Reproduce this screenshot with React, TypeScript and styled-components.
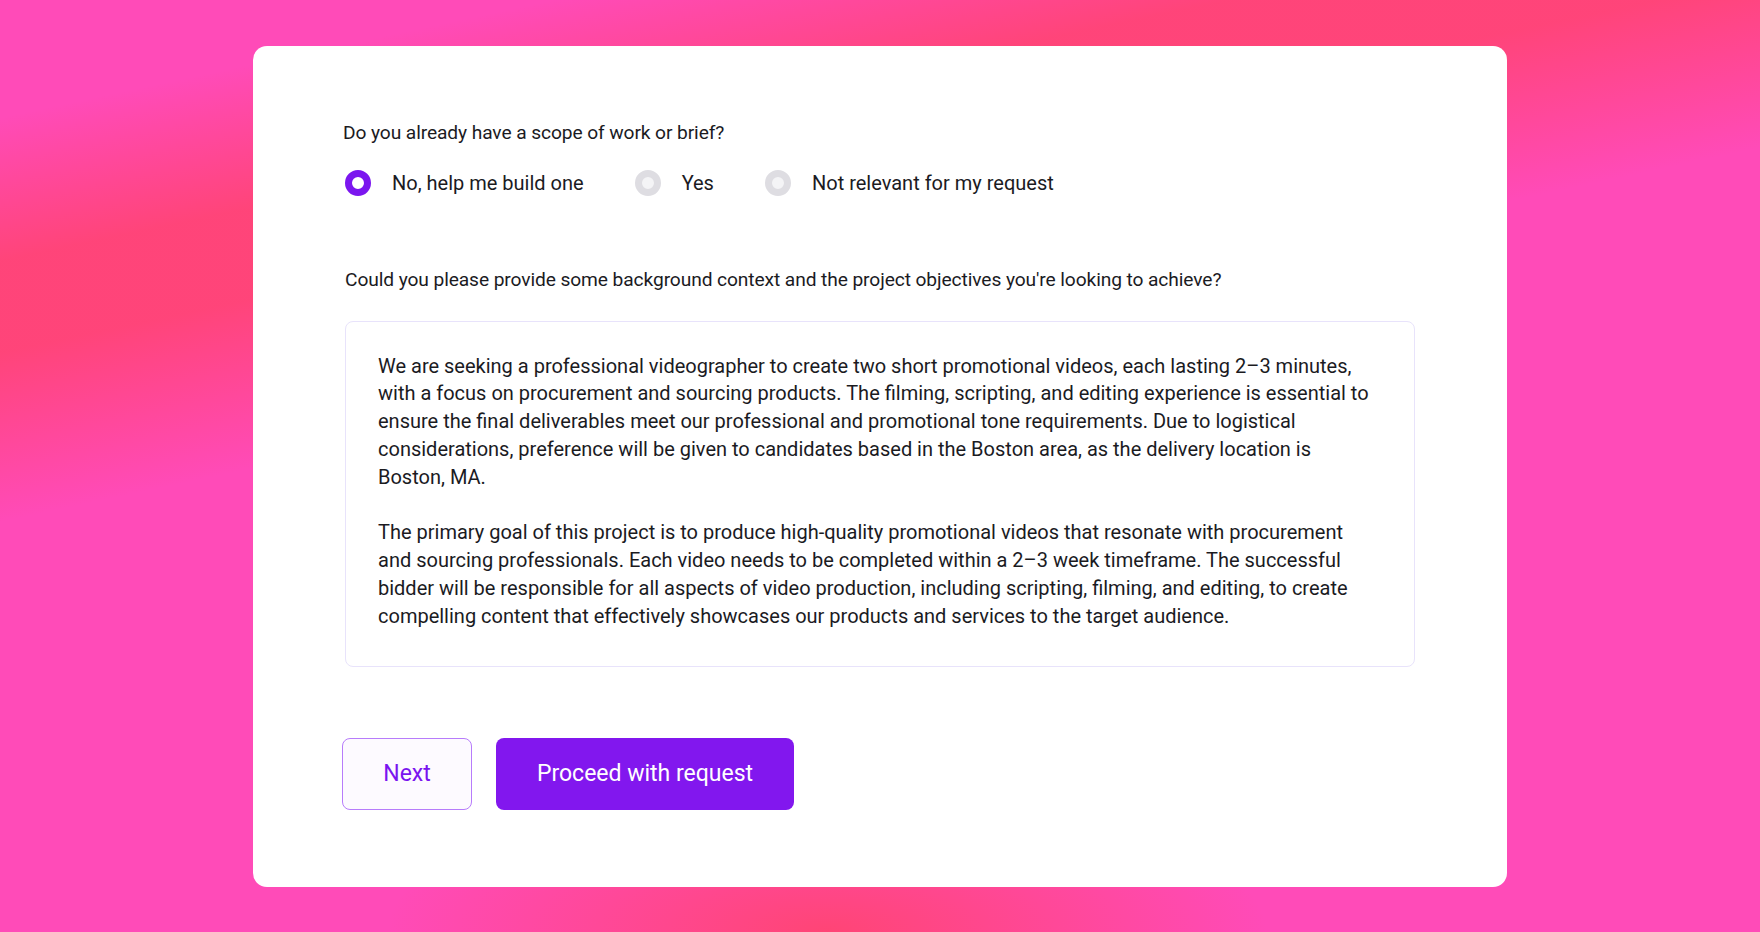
import styled, { createGlobalStyle } from "styled-components";

const GlobalStyle = createGlobalStyle`
  html, body {
    margin: 0;
    padding: 0;
  }

  body {
    font-family: Roboto, "Liberation Sans", Arial, sans-serif;
    color: #1b1b1f;
    -webkit-font-smoothing: antialiased;
  }
`;

const options = ["No, help me build one", "Yes", "Not relevant for my request"];

// brief text, broken where the original field wraps
const paragraphs = [
  [
    "We are seeking a professional videographer to create two short promotional videos, each lasting 2–3 minutes,",
    "with a focus on procurement and sourcing products. The filming, scripting, and editing experience is essential to",
    "ensure the final deliverables meet our professional and promotional tone requirements. Due to logistical",
    "considerations, preference will be given to candidates based in the Boston area, as the delivery location is",
    "Boston, MA.",
  ],
  [
    "The primary goal of this project is to produce high-quality promotional videos that resonate with procurement",
    "and sourcing professionals. Each video needs to be completed within a 2–3 week timeframe. The successful",
    "bidder will be responsible for all aspects of video production, including scripting, filming, and editing, to create",
    "compelling content that effectively showcases our products and services to the target audience.",
  ],
];

export default function App() {
  return (
    <>
      <GlobalStyle />
      <Page>
        <Card>
          <Question>Do you already have a scope of work or brief?</Question>
          <RadioGroup>
            {options.map((opt, i) => (
              <RadioOption key={opt}>
                <RadioDot $checked={i === 0} />
                <RadioLabel>{opt}</RadioLabel>
              </RadioOption>
            ))}
          </RadioGroup>

          <SecondQuestion>
            Could you please provide some background context and the project
            objectives you're looking to achieve?
          </SecondQuestion>
          <TextBox>
            {paragraphs.map((lines) => (
              <Paragraph key={lines[0]}>
                {lines.map((line) => (
                  <Line key={line}>{line}</Line>
                ))}
              </Paragraph>
            ))}
          </TextBox>

          <Actions>
            <OutlineButton>Next</OutlineButton>
            <PrimaryButton>Proceed with request</PrimaryButton>
          </Actions>
        </Card>
      </Page>
    </>
  );
}

const Page = styled.main`
  width: 100vw;
  height: 100vh;
  display: flex;
  align-items: center;
  justify-content: center;
  overflow: hidden;
  background:
    radial-gradient(ellipse 440px 150px at 47% 100%, rgba(255, 68, 110, 0.9), rgba(255, 68, 110, 0) 100%),
    linear-gradient(
      168deg,
      rgba(255, 74, 184, 0) 9%,
      rgba(255, 68, 118, 0.95) 20%,
      rgba(255, 68, 118, 0.95) 27%,
      rgba(255, 74, 184, 0) 40%
    ),
    #ff4bb8;
`;

const Card = styled.section`
  box-sizing: border-box;
  width: 1254px;
  height: 841px;
  padding: 74px 92px 0 92px;
  background: #fff;
  border-radius: 14px;
  display: flex;
  flex-direction: column;
`;

const Question = styled.h2`
  margin: 0 0 0 -2px;
  font-size: 19.2px;
  line-height: 26px;
  font-weight: 400;
  color: #1b1b1f;
  letter-spacing: -0.1px;
`;

const RadioGroup = styled.div`
  display: flex;
  align-items: center;
  gap: 51px;
  margin-top: 24px;
  height: 26px;
`;

const RadioOption = styled.label`
  display: flex;
  align-items: center;
  gap: 21px;
  cursor: pointer;
`;

const RadioDot = styled.span<{ $checked?: boolean }>`
  box-sizing: border-box;
  width: 26px;
  height: 26px;
  border-radius: 50%;
  border: 7px solid ${(p) => (p.$checked ? "#7b16ef" : "#dedde2")};
  background: ${(p) => (p.$checked ? "#fff" : "#f4f4f6")};
  flex-shrink: 0;
`;

const RadioLabel = styled.span`
  font-size: 20px;
  line-height: 26px;
  color: #1b1b1f;
`;

const SecondQuestion = styled.h2`
  margin: 71px 0 0 0;
  font-size: 19.2px;
  line-height: 26px;
  font-weight: 400;
  color: #1b1b1f;
  letter-spacing: -0.1px;
`;

const TextBox = styled.div`
  box-sizing: border-box;
  margin-top: 28px;
  height: 346px;
  padding: 31px 20px 0 32px;
  border: 1px solid #e8e3fb;
  border-radius: 8px;
  font-size: 20px;
  line-height: 27.8px;
  color: #1b1b1f;
`;

const Paragraph = styled.p`
  margin: 0 0 27.8px 0;
`;

const Line = styled.span`
  display: block;
  white-space: nowrap;
`;

const Actions = styled.div`
  display: flex;
  gap: 24px;
  margin: 71px 0 0 -3px;
`;

const BaseButton = styled.button`
  box-sizing: border-box;
  height: 72px;
  border-radius: 8px;
  font-family: Roboto, "Liberation Sans", Arial, sans-serif;
  font-size: 23px;
  cursor: pointer;
`;

const OutlineButton = styled(BaseButton)`
  width: 130px;
  background: #fdfaff;
  border: 1px solid #b77cfb;
  color: #7a14ef;
`;

const PrimaryButton = styled(BaseButton)`
  width: 298px;
  background: #8217ee;
  border: none;
  color: #fff;
`;
